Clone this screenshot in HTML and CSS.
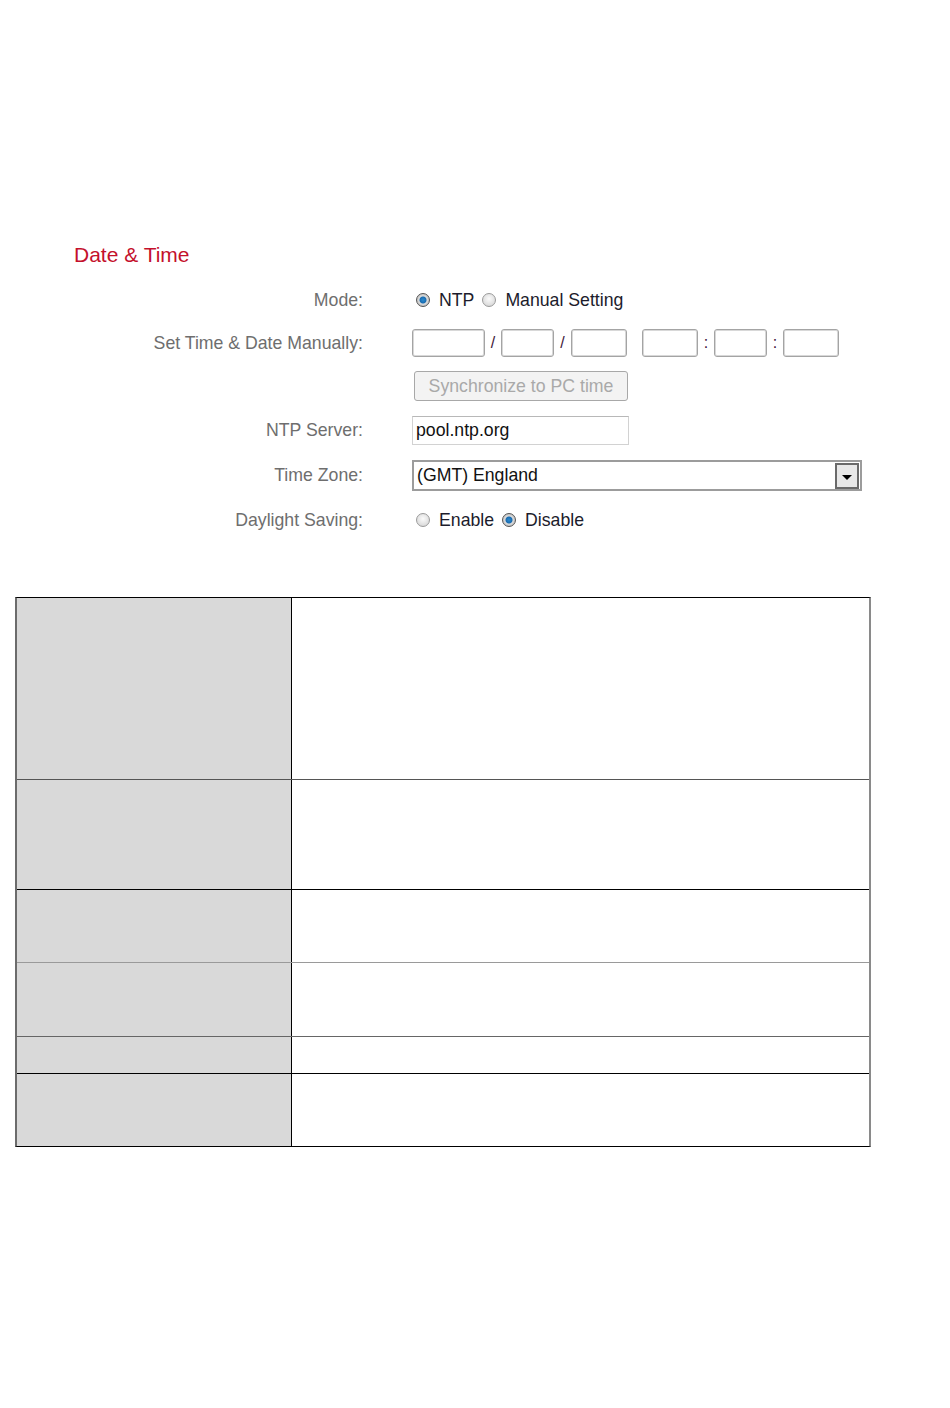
FILE: index.html
```html
<!DOCTYPE html>
<html lang="en">
<head>
  <meta charset="UTF-8" />
  <title>Date &amp; Time</title>
  <link rel="stylesheet" href="styles.css">
</head>
<body>
  <div class="page">
    <h2 class="title">Date &amp; Time</h2>

    <div class="form">
      <div class="lbl">Mode:</div>
      <div class="ctl">
        <span class="radio checked"></span><span class="opt">NTP</span>
        <span class="radio"></span><span class="opt">Manual Setting</span>
      </div>

      <div class="lbl">Set Time &amp; Date Manually:</div>
      <div class="ctl">
        <input type="text" class="box box-year">
        <span class="sep">/</span>
        <input type="text" class="box box-small">
        <span class="sep sep-wide">/</span>
        <input type="text" class="box box-mid">
        <input type="text" class="box box-mid box-hour">
        <span class="sep">:</span>
        <input type="text" class="box box-small">
        <span class="sep">:</span>
        <input type="text" class="box box-mid">
      </div>

      <div class="lbl"></div>
      <div class="ctl">
        <button class="sync" disabled>Synchronize to PC time</button>
      </div>

      <div class="lbl">NTP Server:</div>
      <div class="ctl">
        <input type="text" class="server" value="pool.ntp.org">
      </div>

      <div class="lbl">Time Zone:</div>
      <div class="ctl">
        <div class="select">
          <span class="select-text">(GMT) England</span>
          <span class="select-btn"><span class="caret"></span></span>
        </div>
      </div>

      <div class="lbl">Daylight Saving:</div>
      <div class="ctl">
        <span class="radio"></span><span class="opt">Enable</span>
        <span class="radio checked"></span><span class="opt">Disable</span>
      </div>
    </div>

    <div class="info">
      <div class="info-row row-a"><div class="info-key"></div><div class="info-val"></div></div>
      <div class="info-row row-b line-dark"><div class="info-key"></div><div class="info-val"></div></div>
      <div class="info-row row-c"><div class="info-key"></div><div class="info-val"></div></div>
      <div class="info-row row-d line-light"><div class="info-key"></div><div class="info-val"></div></div>
      <div class="info-row row-e line-mid"><div class="info-key"></div><div class="info-val"></div></div>
      <div class="info-row row-c"><div class="info-key"></div><div class="info-val"></div></div>
    </div>
  </div>
</body>
</html>
```

FILE: styles.css
```css
/* Global */
body {
  margin: 0;
  background: #fff;
  font-family: "Liberation Sans", Arial, sans-serif;
  font-size: 17.7px;
  color: #1c1c2c;
}
.page {
  padding-top: 242px;
}
.title {
  margin: 0 0 19px 74px;
  font-size: 21px;
  font-weight: normal;
  line-height: 25px;
  color: #c4102c;
}

/* Settings form: label column + control column */
.form {
  display: grid;
  grid-template-columns: 363px 1fr;
  grid-template-rows: 28px 28px 29px 29px 31px 28px;
  column-gap: 49px;
  row-gap: 15px;
  align-items: center;
}
.lbl {
  text-align: right;
  color: #6e6e6e;
  white-space: nowrap;
}
.ctl {
  display: flex;
  align-items: center;
  height: 100%;
}

/* Radio buttons */
.radio {
  width: 14px;
  height: 14px;
  box-sizing: border-box;
  border-radius: 50%;
  border: 1px solid #9a9a9a;
  background: radial-gradient(circle at 50% 40%, #fbfbfb, #d0d0d0);
  margin-left: 4px;
  margin-right: 9px;
}
.radio.checked {
  border-color: #555;
  background: radial-gradient(circle, #2a8ad0 0, #1a6cb0 3px, #dcdcdc 4px, #c4c4c4 6px);
}
.opt + .radio {
  margin-left: 8px;
}

/* Date / time boxes */
.box {
  height: 28px;
  box-sizing: border-box;
  border: 1px solid #a4a4a4;
  box-shadow: inset 0 0 0 1px #d8d8d8;
  border-radius: 3px;
  padding: 0;
  margin: 0;
  background: #fff;
}
.box-year { width: 73px; }
.box-small { width: 53px; }
.box-mid { width: 56px; }
.box-hour { margin-left: 15px; }
.sep {
  width: 16px;
  text-align: center;
  font-size: 16px;
  color: #40203a;
}
.sep-wide { width: 17px; }

.sync {
  margin: -1px 0 0 2px;
  width: 214px;
  height: 30px;
  box-sizing: border-box;
  border: 1px solid #a8a8a8;
  border-radius: 3px;
  background: #f3f3f3;
  color: #a9a9a9;
  font-family: inherit;
  font-size: 17.7px;
  padding: 0;
}

.server {
  width: 217px;
  height: 29px;
  box-sizing: border-box;
  margin: 0;
  border: 1px solid #d2d2d2;
  border-top-color: #b8b8b8;
  padding: 0 0 0 3px;
  font-family: inherit;
  font-size: 17.7px;
  color: #111;
}

/* Time zone drop-down */
.select {
  width: 450px;
  height: 31px;
  box-sizing: border-box;
  border: 2px solid #9c9c9c;
  display: flex;
  align-items: center;
  background: #fff;
}
.select-text {
  flex: 1;
  padding-left: 3px;
  color: #111;
}
.select-btn {
  width: 24px;
  height: 26px;
  box-sizing: border-box;
  margin-right: 1px;
  border: 2px solid #6a6a6a;
  background: #e8e8e8;
  display: flex;
  align-items: center;
  justify-content: center;
}
.caret {
  margin-top: 3px;
  border-left: 5px solid transparent;
  border-right: 5px solid transparent;
  border-top: 5px solid #000;
}

/* Description table below the form */
.info {
  margin: 63px 0 0 15px;
  width: 856px;
  box-sizing: border-box;
  border-top: 1px solid #000;
  border-left: 2px solid #6c6c6c;
  border-right: 2px solid #8a8a8a;
  border-bottom: 1px solid #000;
}
.info-row {
  display: flex;
  border-top: 1px solid #000;
}
.info-row:first-child { border-top: none; }
.info-row.line-dark { border-top-color: #555; }
.info-row.line-light { border-top-color: #9a9a9a; }
.info-row.line-mid { border-top-color: #666; }
.info-key {
  width: 274px;
  background: #d9d9d9;
  border-right: 1px solid #000;
}
.info-val {
  flex: 1;
}
.row-a { height: 181px; }
.row-b { height: 109px; }
.row-c { height: 72px; }
.row-d { height: 73px; }
.row-e { height: 36px; }
```
